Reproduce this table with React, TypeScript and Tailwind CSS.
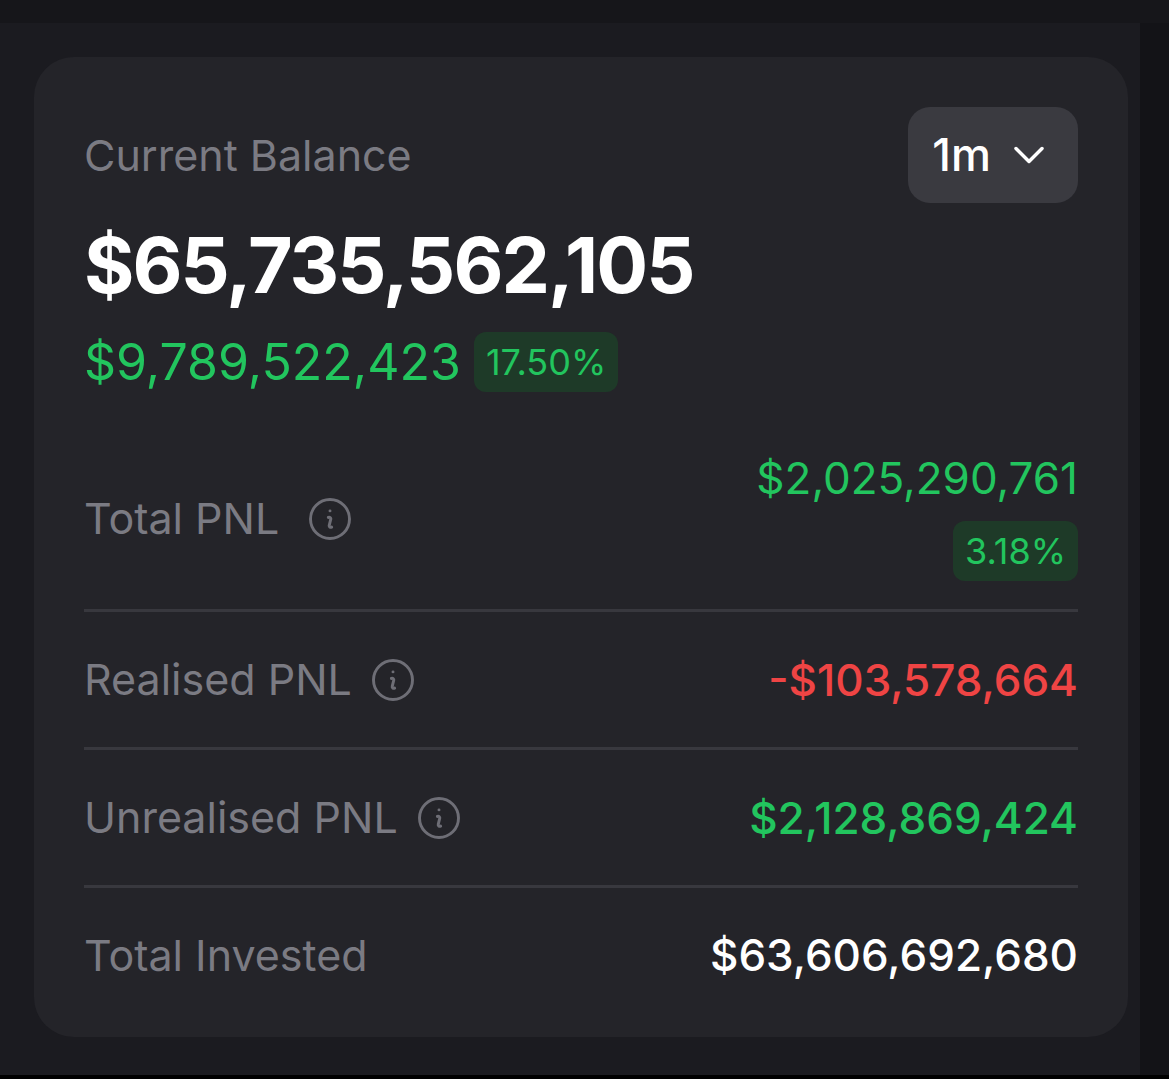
import { ChevronDown } from "lucide-react";

const InfoIcon = () => (
  <svg
    viewBox="0 0 24 24"
    fill="none"
    stroke="currentColor"
    strokeWidth={1.35}
    strokeLinecap="round"
    strokeLinejoin="round"
    className="h-[52px] w-[52px] text-[#6e6e76]"
  >
    <path d="m11.25 11.25.041-.02a.75.75 0 0 1 1.063.852l-.708 2.836a.75.75 0 0 0 1.063.853l.041-.021M21 12a9 9 0 1 1-18 0 9 9 0 0 1 18 0Zm-9-3.75h.008v.008H12V8.25Z" />
  </svg>
);

const Badge = ({ children }: { children: React.ReactNode }) => (
  <span className="inline-flex h-[60px] items-center rounded-[12px] bg-[#1e3a28] px-[12px] text-[36px] leading-none text-[#22c55e]">
    {children}
  </span>
);

const rows = [
  { label: "Realised PNL", value: "-$103,578,664", color: "text-[#ef4444]", info: true, last: false },
  { label: "Unrealised PNL", value: "$2,128,869,424", color: "text-[#22c55e]", info: true, last: false },
  { label: "Total Invested", value: "$63,606,692,680", color: "text-white", info: false, last: true },
];

export default function App() {
  return (
    <div
      className="flex h-screen flex-col bg-[#1b1b20]"
      style={{ fontFamily: "Inter, 'Noto Sans', sans-serif" }}
    >
      <div className="h-[23px] bg-[#16161a]" />
      <div className="flex flex-1">
        <div className="flex-1">
          <div className="ml-[34px] mr-[12px] mt-[34px] rounded-[40px] bg-[#242429] px-[50px] pb-[15px] pt-[50px]">
            <div className="flex items-center justify-between">
              <span className="text-[43px] text-[#7b7b83]">Current Balance</span>
              <button className="flex h-[96px] items-center gap-[12px] rounded-[22px] bg-[#3a3a40] pl-[24px] pr-[23px] text-[45px] font-medium text-white">
                1m
                <ChevronDown className="h-[52px] w-[52px]" strokeWidth={1.6} />
              </button>
            </div>

            <div className="mt-[24px] text-[77px] font-bold leading-none tracking-tight text-white">
              $65,735,562,105
            </div>

            <div className="mt-[28px] flex items-center gap-[13px]">
              <span className="text-[50px] leading-none text-[#22c55e]">$9,789,522,423</span>
              <Badge>17.50%</Badge>
            </div>

            <div className="mt-[64px] flex items-center justify-between border-b-[3px] border-[#38383e] pb-[28px]">
              <div className="flex items-center gap-[25px]">
                <span className="text-[43px] text-[#7b7b83]">Total PNL</span>
                <InfoIcon />
              </div>
              <div className="flex flex-col items-end gap-[21px]">
                <span className="text-[44px] leading-none text-[#22c55e]">$2,025,290,761</span>
                <Badge>3.18%</Badge>
              </div>
            </div>

            {rows.map((r) => (
              <div
                key={r.label}
                className={
                  "flex items-center justify-between " +
                  (r.last ? "h-[134px]" : "h-[138px] border-b-[3px] border-[#38383e]")
                }
              >
                <div className="flex items-center gap-[15px]">
                  <span className="text-[43px] text-[#7b7b83]">{r.label}</span>
                  {r.info && <InfoIcon />}
                </div>
                <span className={"text-[44px] font-medium " + r.color}>{r.value}</span>
              </div>
            ))}
          </div>
        </div>
        <div className="w-[29px] bg-[#131317]" />
      </div>
      <div className="h-[4px] bg-black" />
    </div>
  );
}
